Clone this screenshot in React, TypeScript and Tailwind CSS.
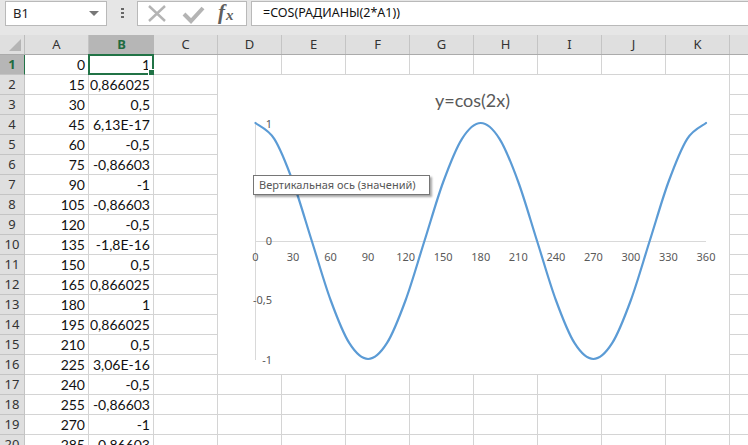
const columns = [
  { name: "A", width: "w-[64px]" },
  { name: "B", width: "w-[65px]" },
  { name: "C", width: "w-[64px]" },
  { name: "D", width: "w-[64px]" },
  { name: "E", width: "w-[64px]" },
  { name: "F", width: "w-[64px]" },
  { name: "G", width: "w-[64px]" },
  { name: "H", width: "w-[64px]" },
  { name: "I", width: "w-[64px]" },
  { name: "J", width: "w-[64px]" },
  { name: "K", width: "w-[64px]" },
  { name: "L", width: "w-[64px]" },
]

const rows: [string, string][] = [
  ["0", "1"],
  ["15", "0,866025"],
  ["30", "0,5"],
  ["45", "6,13E-17"],
  ["60", "-0,5"],
  ["75", "-0,86603"],
  ["90", "-1"],
  ["105", "-0,86603"],
  ["120", "-0,5"],
  ["135", "-1,8E-16"],
  ["150", "0,5"],
  ["165", "0,866025"],
  ["180", "1"],
  ["195", "0,866025"],
  ["210", "0,5"],
  ["225", "3,06E-16"],
  ["240", "-0,5"],
  ["255", "-0,86603"],
  ["270", "-1"],
  ["285", "-0,86603"],
]

const X0 = 37.5
const XSTEP = 450.5 / 24
const Y0 = 166
const YAMP = 118

// smoothed line through the 15 degree points, like Excel does it
function curvePath() {
  const pts = Array.from({ length: 25 }, (_, i) => {
    const v = Math.cos((i * 30 * Math.PI) / 180)
    return [X0 + i * XSTEP, Y0 - v * YAMP]
  })
  let d = `M${pts[0][0]} ${pts[0][1]}`
  for (let i = 0; i < pts.length - 1; i++) {
    const p0 = pts[Math.max(i - 1, 0)]
    const p1 = pts[i]
    const p2 = pts[i + 1]
    const p3 = pts[Math.min(i + 2, pts.length - 1)]
    const c1x = p1[0] + (p2[0] - p0[0]) / 6
    const c1y = p1[1] + (p2[1] - p0[1]) / 6
    const c2x = p2[0] - (p3[0] - p1[0]) / 6
    const c2y = p2[1] - (p3[1] - p1[1]) / 6
    d += ` C${c1x} ${c1y} ${c2x} ${c2y} ${p2[0]} ${p2[1]}`
  }
  return d
}

const xLabels = [0, 30, 60, 90, 120, 150, 180, 210, 240, 270, 300, 330, 360]
const yLabels = [
  { text: "1", y: 49 },
  { text: "0,5", y: 107 },
  { text: "0", y: 166 },
  { text: "-0,5", y: 225 },
  { text: "-1", y: 285 },
]

function Toolbar() {
  return (
    <div className="h-[35px] flex items-start bg-[#e6e6e6] font-['Noto_Sans',sans-serif] text-[13px] text-[#222]">
      <div className="ml-[5px] mt-px w-[102px] h-[25px] bg-white border border-[#b9b9b9] flex items-center justify-between pl-[7px] pr-[6px]">
        <span>B1</span>
        <span className="w-0 h-0 border-x-[5px] border-x-transparent border-t-[5px] border-t-[#777] mr-px" />
      </div>
      <div className="w-[30px] h-[25px] flex flex-col items-center justify-center gap-[2px] pl-px">
        <span className="w-[3px] h-[2px] bg-[#666]" />
        <span className="w-[3px] h-[2px] bg-[#666]" />
        <span className="w-[3px] h-[2px] bg-[#666]" />
      </div>
      <div className="mt-px w-[110px] h-[25px] bg-white border border-[#b9b9b9] flex items-center">
        <svg width="108" height="23" viewBox="0 0 108 23" className="shrink-0">
          <path d="M11 4 L27 19 M27 4 L11 19" stroke="#b4b4b4" strokeWidth="2.4" fill="none" />
          <path d="M46 12 L53 19 L65 6" stroke="#b4b4b4" strokeWidth="4" fill="none" />
          <text x="80" y="17" fontFamily="'Liberation Serif', serif" fontStyle="italic" fontWeight="700" fontSize="21" fill="#5f5f5f">
            f
          </text>
          <text x="88" y="18" fontFamily="'Liberation Serif', serif" fontStyle="italic" fontWeight="700" fontSize="15" fill="#5f5f5f">
            x
          </text>
        </svg>
      </div>
      <div className="ml-[4px] mt-px flex-1 h-[25px] bg-white border border-[#b9b9b9] border-r-0 flex items-center pl-[11px] text-[12.5px] text-[#111]">
        =COS(РАДИАНЫ(2*A1))
      </div>
    </div>
  )
}

function HeaderRow() {
  return (
    <div className="h-[20px] flex bg-[#dfdfdf] border-b border-[#ababab] font-['Noto_Sans',sans-serif] text-[13px] text-[#333]">
      <div className="w-[25px] flex items-end justify-end pr-[3px] pb-[3px] shrink-0 border-r border-[#bdbdbd]">
        <span className="w-0 h-0 border-l-[12px] border-l-transparent border-b-[12px] border-b-[#b5b5b5]" />
      </div>
      {columns.map(col => (
        <div
          key={col.name}
          className={`${col.width} shrink-0 flex items-center justify-center ${col.name === "B" ? "bg-[#b6b6b6] text-[#1f6b41] font-bold" : "border-r border-[#c4c4c4]"}`}
        >
          {col.name}
        </div>
      ))}
    </div>
  )
}

function SheetRow({ index, a, b }: { index: number; a: string; b: string }) {
  const active = index === 1
  return (
    <div className="h-[20px] flex font-['Lato',sans-serif] text-[14px] text-[#111]">
      <div
        className={`w-[25px] shrink-0 flex items-center justify-center border-r border-b font-['Noto_Sans',sans-serif] text-[13px] ${active ? "bg-[#b6b6b6] text-[#1f6b41] font-bold border-r-[#217346] border-b-[#c4c4c4]" : "bg-[#dfdfdf] text-[#333] border-[#c4c4c4]"}`}
      >
        {index}
      </div>
      {columns.map(col => {
        const value = col.name === "A" ? a : col.name === "B" ? b : ""
        return (
          <div
            key={col.name}
            className={`${col.width} shrink-0 flex items-center justify-end pr-[3px] border-r border-b border-[#d4d4d4] relative`}
          >
            {value}
            {active && col.name === "B" && (
              <>
                <span className="absolute -left-px -top-px -right-px -bottom-px border-2 border-[#217346]" />
                <span className="absolute -right-[2px] -bottom-[2px] w-[5px] h-[5px] bg-[#217346] border border-white box-content" />
              </>
            )}
          </div>
        )
      })}
    </div>
  )
}

function Chart() {
  return (
    <div className="absolute left-[218px] top-[75px] w-[511px] h-[300px] bg-white border-b border-[#d4d4d4]">
      <div className="absolute left-0 right-0 top-[12px] text-center font-['Lato',sans-serif] text-[18px] text-[#595959] pr-[2px]">
        y=cos(2x)
      </div>
      <svg width="511" height="300" viewBox="0 0 511 300" className="absolute left-0 top-0">
        <path d="M37.5 49 V285" stroke="#d9d9d9" strokeWidth="1" fill="none" />
        <path d="M37.5 166.5 H488" stroke="#d9d9d9" strokeWidth="1" fill="none" />
        <path d={curvePath()} stroke="#5b9bd5" strokeWidth="2.2" fill="none" strokeLinecap="round" />
      </svg>
      {yLabels.map(label => (
        <div
          key={label.text}
          style={{ top: label.y - 9 }}
          className="absolute right-[457px] leading-[18px] font-['Noto_Sans',sans-serif] text-[11px] text-[#595959]"
        >
          {label.text}
        </div>
      ))}
      {xLabels.map((label, i) => (
        <div
          key={label}
          style={{ left: X0 + i * 2 * XSTEP - 20 }}
          className="absolute top-[174px] w-[40px] text-center leading-[16px] font-['Noto_Sans',sans-serif] text-[11px] text-[#595959]"
        >
          {label}
        </div>
      ))}
      <div className="absolute left-[35px] top-[100px] w-[177px] h-[20px] bg-white border border-[#767676] shadow-[2px_2px_2px_rgba(0,0,0,0.35)] flex items-center pl-[5px] font-['Noto_Sans',sans-serif] text-[11px] text-[#575757] whitespace-nowrap">
        Вертикальная ось (значений)
      </div>
    </div>
  )
}

export default function App() {
  return (
    <div className="w-[748px] h-[445px] overflow-hidden relative bg-white">
      <Toolbar />
      <HeaderRow />
      {rows.map((row, i) => (
        <SheetRow key={i} index={i + 1} a={row[0]} b={row[1]} />
      ))}
      <Chart />
    </div>
  )
}
